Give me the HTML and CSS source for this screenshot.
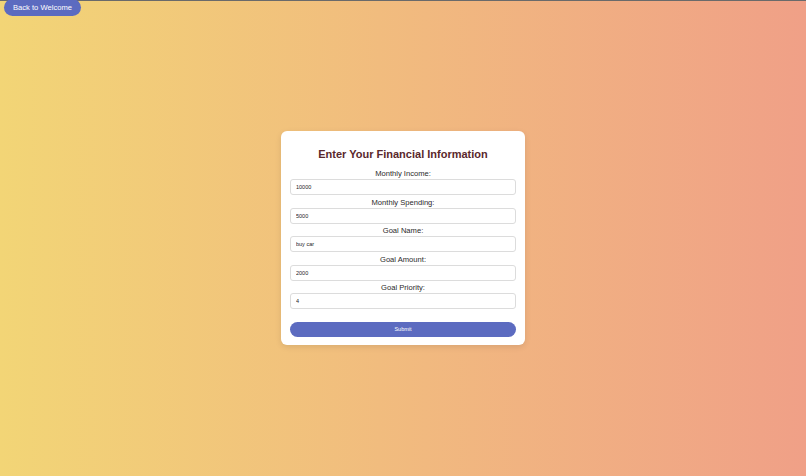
FILE: index.html
```html
<!DOCTYPE html>
<html lang="en">
<head>
<meta charset="utf-8">
<title>Financial Information</title>
<link rel="stylesheet" href="styles.css">
</head>
<body>
<button class="back-btn" type="button">Back to Welcome</button>
<main class="page">
  <form class="card">
    <h2 class="title">Enter Your Financial Information</h2>
    <div class="field">
      <label class="label">Monthly Income:</label>
      <input class="input" type="text" value="10000">
    </div>
    <div class="field">
      <label class="label">Monthly Spending:</label>
      <input class="input" type="text" value="5000">
    </div>
    <div class="field">
      <label class="label">Goal Name:</label>
      <input class="input" type="text" value="buy car">
    </div>
    <div class="field">
      <label class="label">Goal Amount:</label>
      <input class="input" type="text" value="2000">
    </div>
    <div class="field">
      <label class="label">Goal Priority:</label>
      <input class="input" type="text" value="4">
    </div>
    <button class="submit" type="button">Submit</button>
  </form>
</main>
</body>
</html>
```

FILE: styles.css
```css
* { box-sizing: border-box; }

html, body {
  margin: 0;
  padding: 0;
  height: 100%;
}

body {
  font-family: "Liberation Sans", Arial, sans-serif;
  background: linear-gradient(to right, #f2d576, #f0a087);
  box-shadow: inset 0 1px 0 #6a6a6a;
  position: relative;
  overflow: hidden;
}

.back-btn {
  position: absolute;
  top: -1px;
  left: 4px;
  height: 17px;
  padding: 0 9px;
  border: none;
  border-radius: 9px;
  background: #5c6bc0;
  color: #fff;
  font-family: inherit;
  font-size: 7.6px;
  line-height: 17px;
}

.page {
  height: 100%;
  display: flex;
  align-items: center;
  justify-content: center;
}

.card {
  width: 244px;
  background: #fff;
  border-radius: 6px;
  padding: 14px 9px 8px;
  box-shadow: 0 2px 6px rgba(0, 0, 0, 0.1);
  display: flex;
  flex-direction: column;
  gap: 1.5px;
}

.title {
  margin: 0 0 3.5px;
  font-size: 11px;
  line-height: 18px;
  font-weight: bold;
  color: #5a282c;
  text-align: center;
}

.field {
  display: flex;
  flex-direction: column;
}

.label {
  font-size: 7.6px;
  line-height: 11px;
  color: #2a2a2a;
  text-align: center;
}

.input {
  height: 16px;
  width: 100%;
  border: 1px solid #dcdcdc;
  border-radius: 3px;
  padding: 0 5px;
  font-family: inherit;
  font-size: 5.5px;
  color: #222;
  background: #fff;
  outline: none;
}

.submit {
  margin-top: 11px;
  height: 15px;
  width: 100%;
  border: none;
  border-radius: 8px;
  background: #5c6bc0;
  color: #fff;
  font-family: inherit;
  font-size: 5.5px;
}
```
